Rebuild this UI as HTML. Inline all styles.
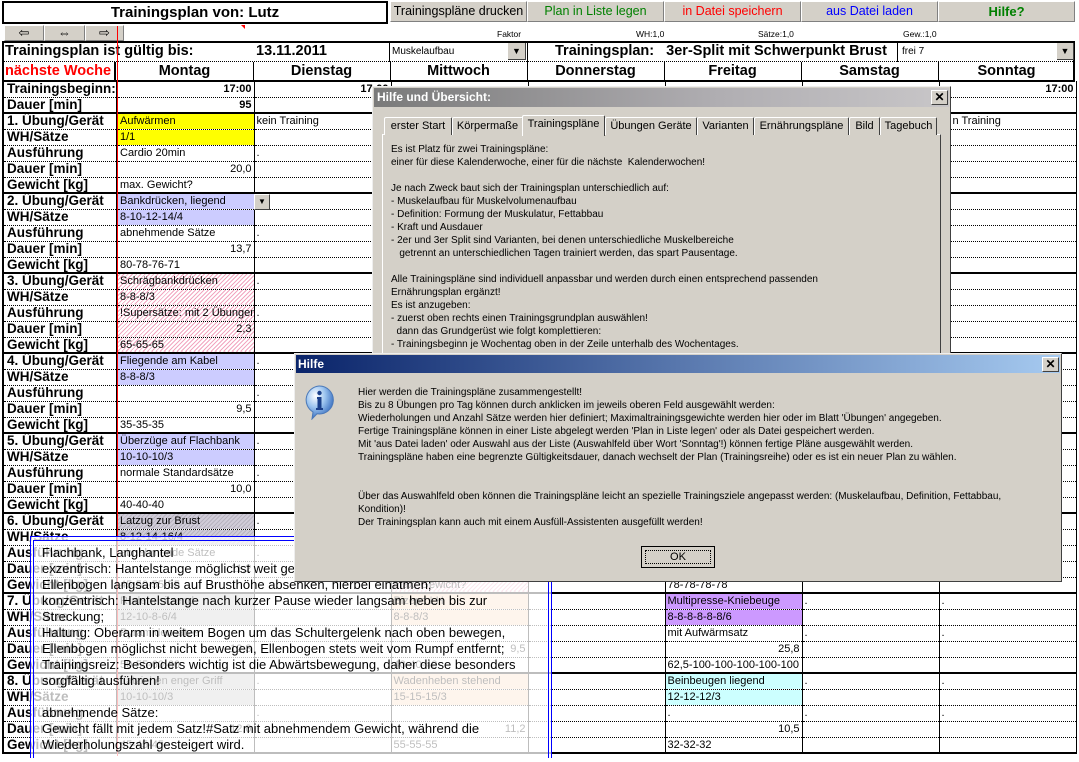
<!DOCTYPE html>
<html><head><meta charset="utf-8">
<style>
body{margin:0;width:1079px;height:758px;position:relative;overflow:hidden;background:#fff;font-family:"Liberation Sans",Arial,sans-serif;color:#000}
.a{position:absolute}
.btn{position:absolute;top:1px;height:21px;background:#d4d0c8;border-top:1px solid #fff;border-left:1px solid #fff;border-right:1px solid #808080;border-bottom:1px solid #808080;box-sizing:border-box;font-size:12.5px;text-align:center;line-height:19px;white-space:nowrap;overflow:hidden}
.ab{position:absolute;top:25px;height:16px;background:#d4d0c8;border-top:1px solid #fff;border-left:1px solid #fff;border-right:1px solid #808080;border-bottom:1px solid #808080;box-sizing:border-box;font-size:13px;text-align:center;line-height:14px}
.sm{position:absolute;top:29px;font-size:8.5px}
.hb{position:absolute;font-weight:bold;font-size:14.5px;white-space:nowrap}
table.g{position:absolute;left:2px;top:81px;border-collapse:collapse;table-layout:fixed;width:1073px}
.g tr{height:16px}
.g td,.g th{padding:0 2px;border-right:1px solid #000;border-bottom:1px dotted #000;font-size:11px;white-space:nowrap;overflow:hidden;line-height:14px;text-align:left;font-weight:normal}
.g th{font-size:13.5px;font-weight:bold;border-right:2px solid #000;border-left:2px solid #000;padding-left:3px;overflow:visible}
.g tr.e td,.g tr.e th{border-bottom:2px solid #000}
.g td.r{text-align:right}
.y{background:#ffff00}.l{background:#ccccff}
.p{background:repeating-linear-gradient(-45deg,#f2a6c0 0 1px,#fff 1px 3px)}
.h{background:repeating-linear-gradient(-45deg,#b8b4c0 0 1px,#d0ccd8 1px 3px)}
.gr{background:#c4c4c4}.pe{background:#fad6b8}.pu{background:#cc99ff}.cy{background:#ccffff}
.dlg{position:absolute;background:#d4d0c8;border-top:1px solid #eee;border-left:1px solid #eee;border-right:1px solid #404040;border-bottom:1px solid #404040;box-sizing:border-box}
.x{position:absolute;width:15px;height:13px;background:#d4d0c8;border-top:1px solid #fff;border-left:1px solid #fff;border-right:1px solid #404040;border-bottom:1px solid #404040;font-size:12px;line-height:12px;text-align:center;font-weight:bold}
.tab{position:absolute;top:117px;height:18px;background:#d4d0c8;border-top:1px solid #fff;border-left:1px solid #fff;border-right:1px solid #404040;box-sizing:border-box;font-size:11px;line-height:17px;text-align:center;white-space:nowrap;border-radius:2px 2px 0 0}
.txt{position:absolute;font-size:10px;line-height:13px;white-space:pre}
</style></head><body>

<div class="a" style="left:2px;top:1px;width:386px;height:23px;border:2px solid #000;box-sizing:border-box;font-weight:bold;font-size:15px;text-align:center;line-height:19px">Trainingsplan von: Lutz</div>
<div class="btn" style="left:390px;width:137px">Trainingspläne drucken</div>
<div class="btn" style="left:527px;width:137px;color:#008000">Plan in Liste legen</div>
<div class="btn" style="left:664px;width:137px;color:#ff0000">in Datei speichern</div>
<div class="btn" style="left:801px;width:137px;color:#0000ff">aus Datei laden</div>
<div class="btn" style="left:938px;width:137px;color:#008000;font-weight:bold;font-size:13px">Hilfe?</div>
<div class="ab" style="left:4px;width:40px">⇦</div>
<div class="ab" style="left:44px;width:41px">⇔</div>
<div class="ab" style="left:85px;width:39px">⇨</div>
<div class="a" style="left:241px;top:25px;width:0;height:0;border-top:4px solid #f00;border-left:4px solid transparent"></div>
<div class="sm" style="left:497px">Faktor</div>
<div class="sm" style="left:636px">WH:1,0</div>
<div class="sm" style="left:758px">Sätze:1,0</div>
<div class="sm" style="left:903px">Gew.:1,0</div>

<div class="a" style="left:2px;top:41px;width:1073px;height:2px;background:#000"></div>
<div class="a" style="left:2px;top:41px;width:2px;height:41px;background:#000"></div>
<div class="a" style="left:1073px;top:41px;width:2px;height:41px;background:#000"></div>
<div class="hb" style="left:5px;top:43px">Trainingsplan ist gültig bis:</div>
<div class="hb" style="left:256px;top:43px">13.11.2011</div>
<div class="a" style="left:389px;top:43px;width:1px;height:19px;background:#000"></div>
<div class="a" style="left:392px;top:46px;font-size:10px">Muskelaufbau</div>
<div class="a" style="left:508px;top:43px;width:18px;height:17px;background:#d4d0c8;border-right:1px solid #404040;border-bottom:1px solid #404040;box-sizing:border-box;font-size:9px;text-align:center;line-height:16px">▼</div>
<div class="a" style="left:527px;top:43px;width:1px;height:19px;background:#000"></div>
<div class="hb" style="left:555px;top:43px">Trainingsplan:&nbsp;&nbsp; 3er-Split mit Schwerpunkt Brust</div>
<div class="a" style="left:897px;top:43px;width:1px;height:19px;background:#000"></div>
<div class="a" style="left:902px;top:46px;font-size:10px">frei 7</div>
<div class="a" style="left:1057px;top:43px;width:17px;height:17px;background:#d4d0c8;border-right:1px solid #404040;border-bottom:1px solid #404040;box-sizing:border-box;font-size:9px;text-align:center;line-height:16px">▼</div>
<div class="a" style="left:2px;top:61px;width:1073px;border-top:1px dotted #000"></div>
<div class="a" style="left:114px;top:62px;width:2px;height:20px;background:#000"></div>
<div class="hb" style="left:5px;top:63px;color:#ff0000">nächste Woche</div>
<div class="hb" style="left:116px;top:63px;width:137px;text-align:center">Montag</div>
<div class="a" style="left:253px;top:62px;width:1px;height:20px;background:#000"></div>
<div class="hb" style="left:253px;top:63px;width:137px;text-align:center">Dienstag</div>
<div class="a" style="left:390px;top:62px;width:1px;height:20px;background:#000"></div>
<div class="hb" style="left:390px;top:63px;width:137px;text-align:center">Mittwoch</div>
<div class="a" style="left:527px;top:62px;width:1px;height:20px;background:#000"></div>
<div class="hb" style="left:527px;top:63px;width:137px;text-align:center">Donnerstag</div>
<div class="a" style="left:664px;top:62px;width:1px;height:20px;background:#000"></div>
<div class="hb" style="left:664px;top:63px;width:137px;text-align:center">Freitag</div>
<div class="a" style="left:801px;top:62px;width:1px;height:20px;background:#000"></div>
<div class="hb" style="left:801px;top:63px;width:137px;text-align:center">Samstag</div>
<div class="a" style="left:938px;top:62px;width:1px;height:20px;background:#000"></div>
<div class="hb" style="left:938px;top:63px;width:137px;text-align:center">Sonntag</div>
<div class="a" style="left:2px;top:80px;width:1073px;height:2px;background:#000"></div>

<table class="g">
<colgroup><col style="width:114px"><col style="width:137px"><col style="width:137px"><col style="width:137px"><col style="width:137px"><col style="width:137px"><col style="width:137px"><col style="width:137px"></colgroup>
<tr><th>Trainingsbeginn:</th><td class="r"><b>17:00</b></td><td class="r"><b>17:00</b></td><td></td><td></td><td></td><td></td><td class="r"><b>17:00</b></td></tr>
<tr class="e"><th>Dauer [min]</th><td class="r"><b>95</b></td><td></td><td></td><td></td><td></td><td></td><td></td></tr>
<tr><th>1. Übung/Gerät</th><td class="y">Aufwärmen</td><td>kein Training</td><td></td><td></td><td></td><td></td><td style="padding-left:13px">n Training</td></tr>
<tr><th>WH/Sätze</th><td class="y">1/1</td><td></td><td></td><td></td><td></td><td></td><td></td></tr>
<tr><th>Ausführung</th><td>Cardio 20min</td><td>.</td><td></td><td></td><td></td><td></td><td></td></tr>
<tr><th>Dauer [min]</th><td class="r">20,0</td><td></td><td></td><td></td><td></td><td></td><td></td></tr>
<tr class="e"><th>Gewicht [kg]</th><td>max. Gewicht?</td><td></td><td></td><td></td><td></td><td></td><td></td></tr>
<tr><th>2. Übung/Gerät</th><td class="l">Bankdrücken, liegend</td><td></td><td></td><td></td><td></td><td></td><td></td></tr>
<tr><th>WH/Sätze</th><td class="l">8-10-12-14/4</td><td></td><td></td><td></td><td></td><td></td><td></td></tr>
<tr><th>Ausführung</th><td>abnehmende Sätze</td><td>.</td><td></td><td></td><td></td><td></td><td></td></tr>
<tr><th>Dauer [min]</th><td class="r">13,7</td><td></td><td></td><td></td><td></td><td></td><td></td></tr>
<tr class="e"><th>Gewicht [kg]</th><td>80-78-76-71</td><td></td><td></td><td></td><td></td><td></td><td></td></tr>
<tr><th>3. Übung/Gerät</th><td class="p">Schrägbankdrücken</td><td>.</td><td></td><td></td><td></td><td></td><td></td></tr>
<tr><th>WH/Sätze</th><td class="p">8-8-8/3</td><td></td><td></td><td></td><td></td><td></td><td></td></tr>
<tr><th>Ausführung</th><td class="p">!Supersätze: mit 2 Übungen</td><td>.</td><td></td><td></td><td></td><td></td><td></td></tr>
<tr><th>Dauer [min]</th><td class="p r">2,3</td><td></td><td></td><td></td><td></td><td></td><td></td></tr>
<tr class="e"><th>Gewicht [kg]</th><td class="p">65-65-65</td><td></td><td></td><td></td><td></td><td></td><td></td></tr>
<tr><th>4. Übung/Gerät</th><td class="l">Fliegende am Kabel</td><td>.</td><td></td><td></td><td></td><td></td><td></td></tr>
<tr><th>WH/Sätze</th><td class="l">8-8-8/3</td><td></td><td></td><td></td><td></td><td></td><td></td></tr>
<tr><th>Ausführung</th><td></td><td>.</td><td></td><td></td><td></td><td></td><td></td></tr>
<tr><th>Dauer [min]</th><td class="r">9,5</td><td></td><td></td><td></td><td></td><td></td><td></td></tr>
<tr class="e"><th>Gewicht [kg]</th><td>35-35-35</td><td></td><td></td><td></td><td></td><td></td><td></td></tr>
<tr><th>5. Übung/Gerät</th><td class="l">Überzüge auf Flachbank</td><td>.</td><td></td><td></td><td></td><td></td><td></td></tr>
<tr><th>WH/Sätze</th><td class="l">10-10-10/3</td><td></td><td></td><td></td><td></td><td></td><td></td></tr>
<tr><th>Ausführung</th><td>normale Standardsätze</td><td>.</td><td></td><td></td><td></td><td></td><td></td></tr>
<tr><th>Dauer [min]</th><td class="r">10,0</td><td></td><td></td><td></td><td></td><td></td><td></td></tr>
<tr class="e"><th>Gewicht [kg]</th><td>40-40-40</td><td></td><td></td><td></td><td></td><td></td><td></td></tr>
<tr><th>6. Übung/Gerät</th><td class="h">Latzug zur Brust</td><td>.</td><td></td><td></td><td></td><td></td><td></td></tr>
<tr><th>WH/Sätze</th><td class="h">8-12-14-16/4</td><td></td><td></td><td></td><td></td><td></td><td></td></tr>
<tr><th>Ausführung</th><td>abnehmende Sätze</td><td>.</td><td></td><td></td><td></td><td></td><td></td></tr>
<tr><th>Dauer [min]</th><td class="r">11,2</td><td></td><td></td><td></td><td></td><td></td><td></td></tr>
<tr class="e"><th>Gewicht [kg]</th><td>45-50-55-55</td><td></td><td class="p">max. Gewicht?</td><td></td><td>78-78-78-78</td><td></td><td></td></tr>
<tr><th>7. Übung/Gerät</th><td class="gr">Rudern sitzend</td><td>.</td><td class="pe">Bizeps LH</td><td></td><td class="pu">Multipresse-Kniebeuge</td><td>.</td><td>.</td></tr>
<tr><th>WH/Sätze</th><td class="gr">12-10-8-6/4</td><td></td><td class="pe">8-8-8/3</td><td></td><td class="pu">8-8-8-8-8-8/6</td><td></td><td></td></tr>
<tr><th>Ausführung</th><td>Pyramidensätze</td><td>.</td><td></td><td></td><td>mit Aufwärmsatz</td><td>.</td><td>.</td></tr>
<tr><th>Dauer [min]</th><td class="r">12,3</td><td></td><td class="r">9,5</td><td></td><td class="r">25,8</td><td></td><td></td></tr>
<tr class="e"><th>Gewicht [kg]</th><td>50-55-60-60</td><td></td><td>40-40-40</td><td></td><td>62,5-100-100-100-100-100</td><td></td><td></td></tr>
<tr><th>8. Übung/Gerät</th><td class="gr">Latziehen enger Griff</td><td>.</td><td class="pe">Wadenheben stehend</td><td></td><td class="cy">Beinbeugen liegend</td><td>.</td><td>.</td></tr>
<tr><th>WH/Sätze</th><td class="gr">10-10-10/3</td><td></td><td class="pe">15-15-15/3</td><td></td><td class="cy">12-12-12/3</td><td></td><td></td></tr>
<tr><th>Ausführung</th><td></td><td>.</td><td></td><td></td><td>.</td><td>.</td><td>.</td></tr>
<tr><th>Dauer [min]</th><td class="r">12,0</td><td></td><td class="r">11,2</td><td></td><td class="r">10,5</td><td></td><td></td></tr>
<tr class="e"><th>Gewicht [kg]</th><td>45-45-45</td><td></td><td>55-55-55</td><td></td><td>32-32-32</td><td></td><td></td></tr>
</table>
<div class="a" style="left:117px;top:26px;width:1px;height:730px;background:#f00"></div>
<div class="a" style="left:254px;top:194px;width:16px;height:16px;background:#d4d0c8;border-top:1px solid #fff;border-left:1px solid #fff;border-right:1px solid #404040;border-bottom:1px solid #404040;box-sizing:border-box;font-size:8px;text-align:center;line-height:14px">▼</div>

<div class="a" style="left:30px;top:537px;width:522px;height:225px;background:rgba(255,255,255,0.74)"></div>
<div class="a" style="left:30px;top:536px;width:522px;height:1px;background:#00f"></div>
<div class="a" style="left:33px;top:540px;width:516px;height:1px;background:#00f"></div>
<div class="a" style="left:30px;top:536px;width:1px;height:222px;background:#00f"></div>
<div class="a" style="left:33px;top:540px;width:1px;height:218px;background:#00f"></div>
<div class="a" style="left:548px;top:540px;width:1px;height:218px;background:#00f"></div>
<div class="a" style="left:551px;top:536px;width:1px;height:222px;background:#00f"></div>
<div class="a" style="left:42px;top:545px;font-size:13px;line-height:16px;white-space:pre">Flachbank, Langhantel
exzentrisch: Hantelstange möglichst weit gehend absenken, hierbei einatmen;
Ellenbogen langsam bis auf Brusthöhe absenken, hierbei einatmen;
konzentrisch: Hantelstange nach kurzer Pause wieder langsam heben bis zur
Streckung;
Haltung: Oberarm in weitem Bogen um das Schultergelenk nach oben bewegen,
Ellenbogen möglichst nicht bewegen, Ellenbogen stets weit vom Rumpf entfernt;
Trainingsreiz: Besonders wichtig ist die Abwärtsbewegung, daher diese besonders
sorgfältig ausführen!

abnehmende Sätze:
Gewicht fällt mit jedem Satz!#Satz mit abnehmendem Gewicht, während die
Wiederholungszahl gesteigert wird.</div>

<div class="dlg" style="left:372px;top:86px;width:579px;height:280px"></div>
<div class="a" style="left:374px;top:88px;width:575px;height:19px;background:linear-gradient(90deg,#7a7a7a,#b0aeb2 60%,#c8c6c8)"></div>
<div class="a" style="left:377px;top:90px;color:#fff;font-weight:bold;font-size:12px">Hilfe und Übersicht:</div>
<div class="x" style="left:931px;top:90px">✕</div>
<div class="a" style="left:382px;top:134px;width:559px;height:232px;border-top:1px solid #fff;border-left:1px solid #fff;border-right:1px solid #404040;box-sizing:border-box"></div>
<div class="tab" style="left:384px;width:68px">erster Start</div>
<div class="tab" style="left:452px;width:71px">Körpermaße</div>
<div class="tab" style="left:522px;top:115px;height:21px;width:83px;border-bottom:none">Trainingspläne</div>
<div class="tab" style="left:605px;width:92px">Übungen Geräte</div>
<div class="tab" style="left:697px;width:57px">Varianten</div>
<div class="tab" style="left:754px;width:95px">Ernährungspläne</div>
<div class="tab" style="left:849px;width:31px">Bild</div>
<div class="tab" style="left:880px;width:57px">Tagebuch</div>
<div class="txt" style="left:391px;top:143px">Es ist Platz für zwei Trainingspläne:
einer für diese Kalenderwoche, einer für die nächste  Kalenderwochen!

Je nach Zweck baut sich der Trainingsplan unterschiedlich auf:
- Muskelaufbau für Muskelvolumenaufbau
- Definition: Formung der Muskulatur, Fettabbau
- Kraft und Ausdauer
- 2er und 3er Split sind Varianten, bei denen unterschiedliche Muskelbereiche
   getrennt an unterschiedlichen Tagen trainiert werden, das spart Pausentage.

Alle Trainingspläne sind individuell anpassbar und werden durch einen entsprechend passenden
Ernährungsplan ergänzt!
Es ist anzugeben:
- zuerst oben rechts einen Trainingsgrundplan auswählen!
  dann das Grundgerüst wie folgt komplettieren:
- Trainingsbeginn je Wochentag oben in der Zeile unterhalb des Wochentages.</div>

<div class="dlg" style="left:294px;top:353px;width:768px;height:229px;overflow:hidden"></div>
<div class="a" style="left:296px;top:355px;width:764px;height:18px;background:linear-gradient(90deg,#0a246a,#a6caf0)"></div>
<div class="a" style="left:298px;top:357px;color:#fff;font-weight:bold;font-size:12px">Hilfe</div>
<div class="x" style="left:1042px;top:357px">✕</div>
<svg class="a" style="left:303px;top:384px" width="34" height="36" viewBox="0 0 34 36">
<defs><radialGradient id="rg" cx="35%" cy="30%" r="70%"><stop offset="0" stop-color="#fff"/><stop offset="0.5" stop-color="#9cc4ef"/><stop offset="1" stop-color="#3a6fc0"/></radialGradient></defs>
<path d="M16 2 A14 14 0 1 1 14 29.8 L9 35 L10 28 A14 14 0 0 1 16 2 Z" fill="url(#rg)" stroke="#4a78b8" stroke-width="1"/>
<circle cx="16.5" cy="9" r="2.2" fill="#1a3f8a"/>
<path d="M14 13 H18.5 V24 H20 V26 H13 V24 H14.5 V15 H14 Z" fill="#1a3f8a"/>
</svg>
<div class="txt" style="left:358px;top:386px">Hier werden die Trainingspläne zusammengestellt!
Bis zu 8 Übungen pro Tag können durch anklicken im jeweils oberen Feld ausgewählt werden:
Wiederholungen und Anzahl Sätze werden hier definiert; Maximaltrainingsgewichte werden hier oder im Blatt 'Übungen' angegeben.
Fertige Trainingspläne können in einer Liste abgelegt werden 'Plan in Liste legen' oder als Datei gespeichert werden.
Mit 'aus Datei laden' oder Auswahl aus der Liste (Auswahlfeld über Wort 'Sonntag'!) können fertige Pläne ausgewählt werden.
Trainingspläne haben eine begrenzte Gültigkeitsdauer, danach wechselt der Plan (Trainingsreihe) oder es ist ein neuer Plan zu wählen.


Über das Auswahlfeld oben können die Trainingspläne leicht an spezielle Trainingsziele angepasst werden: (Muskelaufbau, Definition, Fettabbau,
Kondition)!
Der Trainingsplan kann auch mit einem Ausfüll-Assistenten ausgefüllt werden!</div>
<div class="a" style="left:641px;top:546px;width:74px;height:22px;border:1px solid #000;box-sizing:border-box;background:#d4d0c8">
<div style="position:absolute;left:3px;top:3px;right:3px;bottom:3px;border:1px dotted #000;font-size:11px;text-align:center;line-height:13px">OK</div></div>
</body></html>
